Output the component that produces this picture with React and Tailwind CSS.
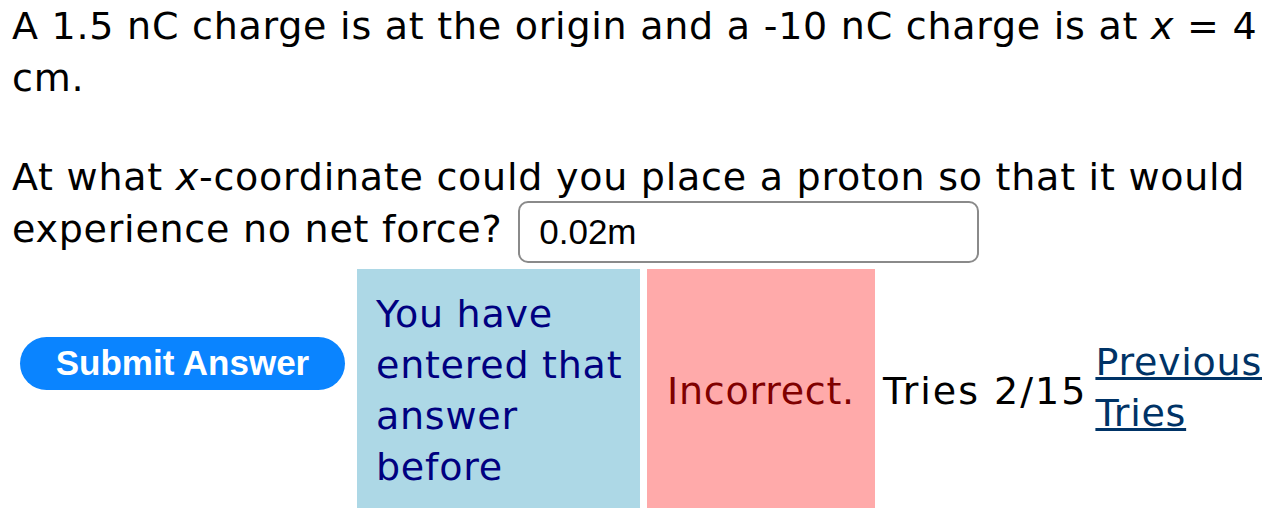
import React from 'react'

const verdana = { fontFamily: 'Verdana, "DejaVu Sans", sans-serif' }

export default function App() {
  return (
    <div className="bg-white text-black min-h-screen pl-[12px] pt-0 tracking-[0.75px]" style={verdana}>
      <p className="text-[38px] leading-[52px] m-0 pr-[20px]">
        A 1.5 nC charge is at the origin and a -10 nC charge is at <i>x</i> = 4 cm.
      </p>
      <p className="text-[38px] leading-[52px] mt-[47px] pr-[20px]">
        At what <i>x</i>-coordinate could you place a proton so that it would experience no net force?{' '}
        <span className="inline-block align-middle ml-[3px] -my-[5px] w-[461px] h-[62px] border-2 border-[#8a8a8a] rounded-[10px] px-[19px] text-[35px] leading-[58px] tracking-normal font-['Liberation_Sans',Arial,sans-serif]">
          0.02m
        </span>
      </p>
      <div className="flex items-stretch mt-[11px]">
        <div className="shrink-0 flex items-center pl-[8px] pr-[12px] pb-[50px]">
          <button className="w-[325px] h-[53px] rounded-full bg-[#0a84ff] text-white font-bold text-[35px] tracking-normal font-['Liberation_Sans',Arial,sans-serif]">
            Submit Answer
          </button>
        </div>
        <div className="shrink-0 w-[283px] bg-[#add8e6] text-[#000080] text-[38px] leading-[51px] pl-[19px] pr-[4px] pt-[20px] pb-[15px]">
          You have entered that answer before
        </div>
        <div className="shrink-0 ml-[7px] w-[228px] bg-[#ffaaaa] text-[#800000] text-[38px] leading-[51px] flex items-center pl-[20px] pt-[6px]">
          Incorrect.
        </div>
        <div className="shrink-0 ml-[8px] flex items-center text-[38px] leading-[51px] tracking-[2px] whitespace-nowrap pt-[6px]">Tries 2/15</div>
        <div className="shrink-0 ml-[8px] flex items-center text-[38px] leading-[51px]">
          <a href="#" className="text-[#003366] underline w-[170px]">
            Previous Tries
          </a>
        </div>
      </div>
    </div>
  )
}
